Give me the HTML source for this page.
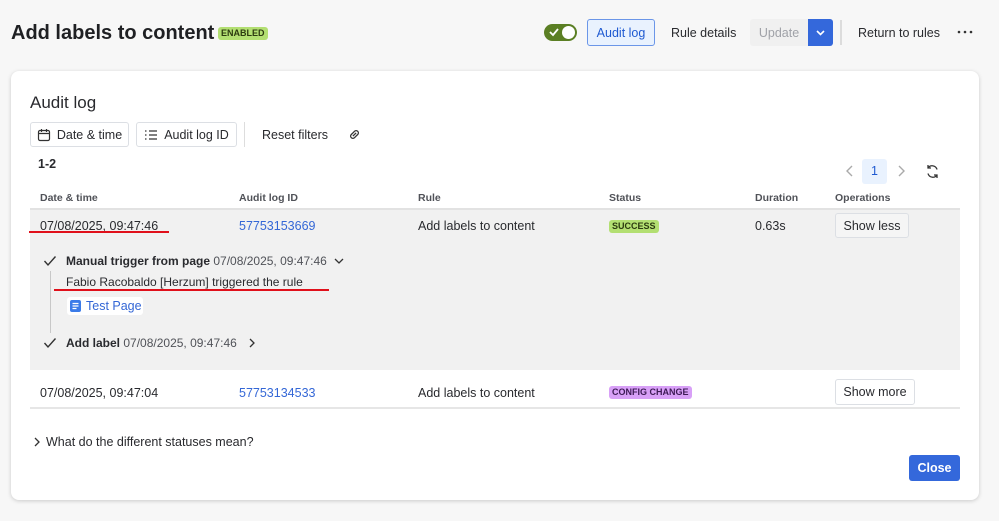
<!DOCTYPE html>
<html><head><meta charset="utf-8"><style>
*{box-sizing:border-box;margin:0;padding:0}
body{width:999px;height:521px;background:#f7f7f7;font-family:"Liberation Sans",sans-serif;color:#292a2e;font-size:12.5px;position:relative;overflow:hidden}
.a{position:absolute;white-space:nowrap}
.btn{position:absolute;border:1px solid #dcdfe4;border-radius:3px;background:#fff;display:flex;align-items:center;justify-content:center;font-size:12.5px;color:#292a2e}
.lz{font-weight:bold;text-transform:uppercase;border-radius:3px;padding:1px 3px;font-size:9px;line-height:11px}
.hd{color:#505258;font-size:10.5px;font-weight:bold;top:192px}
.gray{color:#505258}
</style></head><body>
<div class="a" style="left:11px;top:22px;font-size:20px;font-weight:bold;color:#1f2023">Add labels to content</div>
<div class="a lz" style="left:218px;top:27px;background:#b3df72;color:#2c3a10">ENABLED</div>
<div class="a" style="left:544px;top:24px;width:33px;height:17px;border-radius:9px;background:#5b7f24"><svg width="12" height="12" style="position:absolute;left:4px;top:2px" viewBox="0 0 12 12"><path d="M2 6l3 3 5-6" stroke="#fff" stroke-width="1.8" fill="none"/></svg><div style="position:absolute;right:2px;top:2px;width:13px;height:13px;border-radius:50%;background:#fff"></div></div>
<div class="btn" style="left:587px;top:19px;width:68px;height:27px;border-color:#6b96e8;background:#e9f2fe;color:#1f5ad1">Audit log</div>
<div class="a" style="left:671px;top:26px">Rule details</div>
<div class="a" style="left:750px;top:19px;width:58px;height:27px;background:#f0f0f0;color:#a0a2a8;display:flex;align-items:center;justify-content:center;border-radius:3px 0 0 3px">Update</div>
<div class="a" style="left:808px;top:19px;width:25px;height:27px;background:#3468db;border-radius:0 3px 3px 0"><svg width="25" height="27" viewBox="0 0 25 27"><path d="M9 12l3.5 3.5L16 12" stroke="#fff" stroke-width="1.6" fill="none"/></svg></div>
<div class="a" style="left:840px;top:20px;width:2px;height:25px;background:#dcdcdc"></div>
<div class="a" style="left:858px;top:26px">Return to rules</div>
<svg class="a" style="left:957px;top:30px" width="16" height="4" viewBox="0 0 16 4"><circle cx="2" cy="2" r="1.3" fill="#333"/><circle cx="8" cy="2" r="1.3" fill="#333"/><circle cx="14" cy="2" r="1.3" fill="#333"/></svg>

<div class="a" style="left:11px;top:71px;width:968px;height:429px;background:#fff;border-radius:8px;box-shadow:0 1px 4px rgba(0,0,0,.18)"></div>
<div class="a" style="left:30px;top:93px;font-size:17px">Audit log</div>
<div class="btn" style="left:30px;top:122px;width:99px;height:25px"><svg width="14" height="14" viewBox="0 0 14 14" style="margin-right:6px"><rect x="1.5" y="2.5" width="11" height="10" rx="1.5" stroke="#333" fill="none" stroke-width="1.2"/><path d="M1.5 5.5h11M4.5 1v3M9.5 1v3" stroke="#333" stroke-width="1.2"/></svg>Date &amp; time</div>
<div class="btn" style="left:136px;top:122px;width:101px;height:25px"><svg width="14" height="14" viewBox="0 0 14 14" style="margin-right:6px"><path d="M1 3h1.5M1 7h1.5M1 11h1.5M5 3h8M5 7h8M5 11h8" stroke="#333" stroke-width="1.2"/></svg>Audit log ID</div>
<div class="a" style="left:244px;top:122px;width:1px;height:25px;background:#ddd"></div>
<div class="a" style="left:262px;top:128px">Reset filters</div>
<svg class="a" style="left:347px;top:127px" width="15" height="15" viewBox="0 0 14 14"><path d="M5.5 8.5l3-3M5.5 5.5L4 7a2.1 2.1 0 003 3l1.5-1.5M8.5 8.5L10 7a2.1 2.1 0 00-3-3L5.5 5.5" stroke="#333" stroke-width="1.2" fill="none"/></svg>
<div class="a" style="left:38px;top:157px;font-weight:bold">1-2</div>
<svg class="a" style="left:844px;top:164px" width="12" height="14" viewBox="0 0 12 14"><path d="M8 2L3 7l5 5" stroke="#aaa" stroke-width="1.4" fill="none"/></svg>
<div class="a" style="left:862px;top:159px;width:25px;height:25px;background:#e9f2fe;border-radius:3px;color:#1f5ad1;text-align:center;line-height:25px">1</div>
<svg class="a" style="left:895px;top:164px" width="12" height="14" viewBox="0 0 12 14"><path d="M4 2l5 5-5 5" stroke="#aaa" stroke-width="1.4" fill="none"/></svg>
<svg class="a" style="left:925px;top:164px" width="15" height="15" viewBox="0 0 15 15"><path d="M12 5.5A5 5 0 003 4M3 9.5A5 5 0 0012 11M3 1v3h3M12 14v-3H9" stroke="#333" stroke-width="1.3" fill="none"/></svg>

<div class="a hd" style="left:40px">Date &amp; time</div>
<div class="a hd" style="left:239px">Audit log ID</div>
<div class="a hd" style="left:418px">Rule</div>
<div class="a hd" style="left:609px">Status</div>
<div class="a hd" style="left:755px">Duration</div>
<div class="a hd" style="left:835px">Operations</div>
<div class="a" style="left:30px;top:208px;width:930px;height:162px;background:#f1f1f1;border-top:2px solid #e2e2e2"></div>
<div class="a" style="left:40px;top:219px">07/08/2025, 09:47:46</div>
<div class="a" style="left:29px;top:231px;width:140px;height:2px;background:#e0101b"></div>
<div class="a" style="left:239px;top:219px;color:#3467d6">57753153669</div>
<div class="a" style="left:418px;top:219px">Add labels to content</div>
<div class="a lz" style="left:609px;top:220px;background:#b3df72;color:#2c3a10">SUCCESS</div>
<div class="a" style="left:755px;top:219px">0.63s</div>
<div class="btn" style="left:835px;top:213px;width:74px;height:25px;background:#f5f5f5">Show less</div>

<svg class="a" style="left:43px;top:255px" width="14" height="12" viewBox="0 0 14 12"><path d="M1.5 6l3.5 4 7.5-8.5" stroke="#333" stroke-width="1.4" fill="none"/></svg>
<div class="a" style="left:66px;top:254px;font-size:12px"><b>Manual trigger from page</b> <span class="gray">07/08/2025, 09:47:46</span></div>
<svg class="a" style="left:334px;top:257px" width="10" height="8" viewBox="0 0 10 8"><path d="M1 2l4 4 4-4" stroke="#333" stroke-width="1.3" fill="none"/></svg>
<div class="a" style="left:50px;top:271px;width:1px;height:62px;background:#c8c8c8"></div>
<div class="a" style="left:66px;top:275px;font-size:12px">Fabio Racobaldo [Herzum] triggered the rule</div>
<div class="a" style="left:54px;top:289px;width:275px;height:2px;background:#e0101b"></div>
<div class="a" style="left:67px;top:297px;width:76px;height:18px;background:#fff;border-radius:3px"><svg class="a" style="left:3px;top:3px" width="11" height="12" viewBox="0 0 11 12"><rect width="11" height="12" rx="2" fill="#3b7be8"/><path d="M2.5 3.5h6M2.5 6h6M2.5 8.5h4" stroke="#fff" stroke-width="1.2"/></svg><span class="a" style="left:19px;top:2px;color:#3467d6">Test Page</span></div>
<svg class="a" style="left:43px;top:337px" width="14" height="12" viewBox="0 0 14 12"><path d="M1.5 6l3.5 4 7.5-8.5" stroke="#333" stroke-width="1.4" fill="none"/></svg>
<div class="a" style="left:66px;top:336px;font-size:12px"><b>Add label</b> <span class="gray">07/08/2025, 09:47:46</span></div>
<svg class="a" style="left:248px;top:338px" width="8" height="10" viewBox="0 0 8 10"><path d="M2 1l4 4-4 4" stroke="#333" stroke-width="1.3" fill="none"/></svg>

<div class="a" style="left:40px;top:386px">07/08/2025, 09:47:04</div>
<div class="a" style="left:239px;top:386px;color:#3467d6">57753134533</div>
<div class="a" style="left:418px;top:386px">Add labels to content</div>
<div class="a lz" style="left:609px;top:386px;background:#d8a0f7;color:#3d1a55">CONFIG CHANGE</div>
<div class="btn" style="left:835px;top:379px;width:80px;height:26px">Show more</div>
<div class="a" style="left:30px;top:407px;width:930px;height:2px;background:#e6e6e6"></div>

<svg class="a" style="left:33px;top:437px" width="8" height="10" viewBox="0 0 8 10"><path d="M2 1l4 4-4 4" stroke="#333" stroke-width="1.3" fill="none"/></svg>
<div class="a" style="left:46px;top:435px">What do the different statuses mean?</div>
<div class="a" style="left:909px;top:455px;width:51px;height:26px;background:#3468db;color:#fff;border-radius:3px;text-align:center;line-height:26px;font-weight:bold">Close</div>
</body></html>
